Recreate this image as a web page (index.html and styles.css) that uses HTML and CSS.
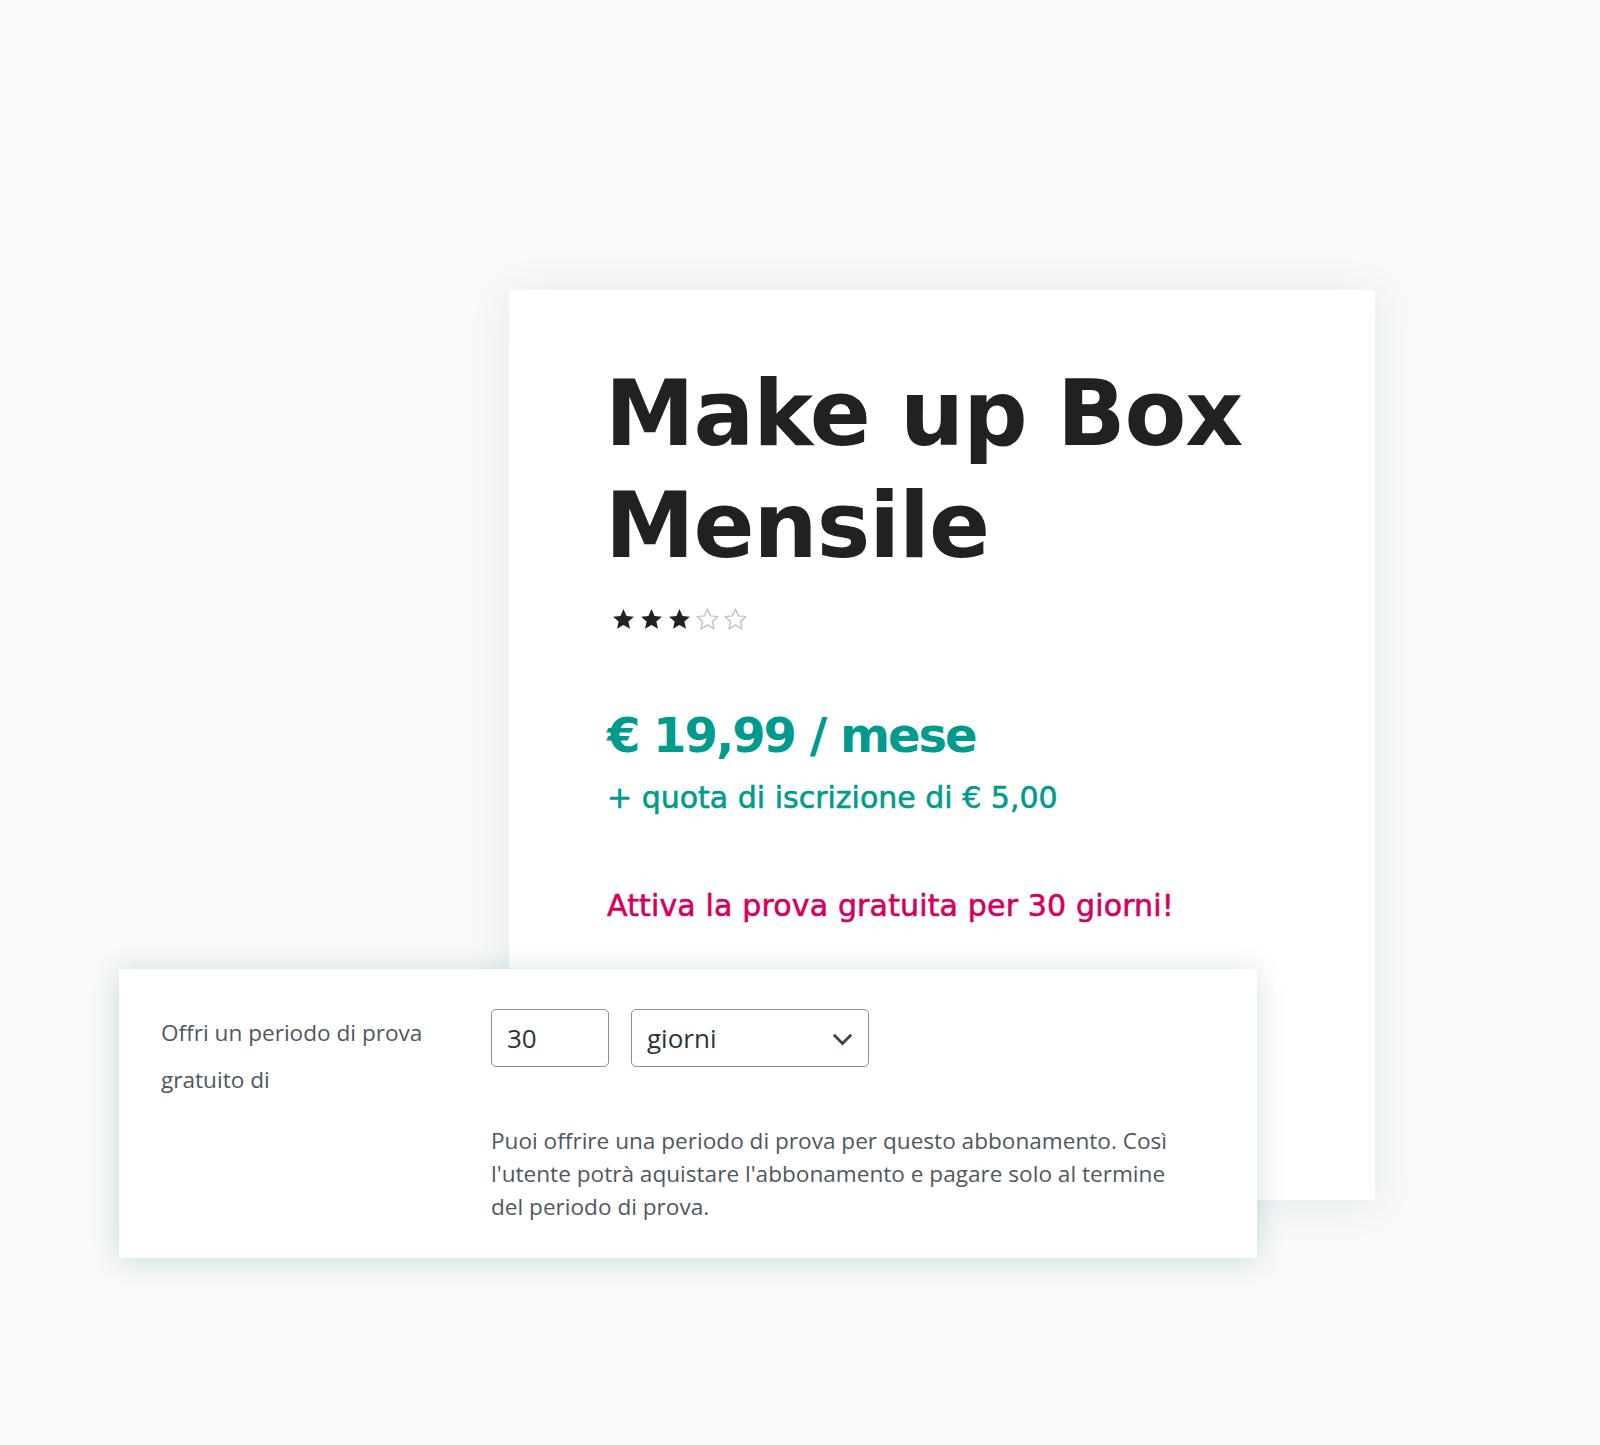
FILE: index.html
```html
<!DOCTYPE html>
<html lang="it">
<head>
<meta charset="utf-8">
<title>Make up Box Mensile</title>
<link rel="stylesheet" href="styles.css">
</head>
<body>
<div class="stage">
  <section class="product-card">
    <h1 class="title">Make up Box Mensile</h1>
    <div class="stars">
      <svg class="star full" viewBox="0 0 24 24"><path d="M12 2l2.94 6.53 7.06.72-5.3 4.750 1.5 6.94L12 17.27 5.8 20.94l1.5-6.94L2 9.25l7.06-.72z"/></svg>
      <svg class="star full" viewBox="0 0 24 24"><path d="M12 2l2.94 6.53 7.06.72-5.3 4.75 1.5 6.94L12 17.27 5.8 20.94l1.5-6.94L2 9.25l7.06-.72z"/></svg>
      <svg class="star full" viewBox="0 0 24 24"><path d="M12 2l2.94 6.53 7.06.72-5.3 4.75 1.5 6.94L12 17.27 5.8 20.94l1.5-6.94L2 9.25l7.06-.72z"/></svg>
      <svg class="star empty" viewBox="0 0 24 24"><path d="M12 2l2.94 6.53 7.06.72-5.3 4.75 1.5 6.94L12 17.27 5.8 20.94l1.5-6.94L2 9.25l7.06-.72z"/></svg>
      <svg class="star empty" viewBox="0 0 24 24"><path d="M12 2l2.94 6.53 7.06.72-5.3 4.75 1.5 6.94L12 17.27 5.8 20.94l1.5-6.94L2 9.25l7.06-.72z"/></svg>
    </div>
    <p class="price">€ 19,99 / mese</p>
    <p class="fee">+ quota di iscrizione di € 5,00</p>
    <p class="trial">Attiva la prova gratuita per 30 giorni!</p>
  </section>

  <section class="settings-card">
    <div class="label">Offri un periodo di prova gratuito di</div>
    <div class="fields">
      <input class="num-input" type="text" value="30">
      <div class="select">
        <span>giorni</span>
        <svg class="chevron" viewBox="0 0 21 13"><path d="M1.8 1.8L10.5 10.5L19.2 1.8"/></svg>
      </div>
    </div>
    <p class="desc">Puoi offrire una periodo di prova per questo abbonamento. Così l'utente potrà aquistare l'abbonamento e pagare solo al termine del periodo di prova.</p>
  </section>
</div>
</body>
</html>
```

FILE: styles.css
```css
html, body {
  margin: 0;
  padding: 0;
}
body {
  background: #f8f9f9;
  width: 1600px;
  min-height: 1445px;
}
.stage {
  display: grid;
  grid-template-columns: 390px 748px 118px;
  grid-template-rows: 679px 231px auto;
  padding: 290px 0 0 119px;
}
.product-card {
  grid-column: 2 / 4;
  grid-row: 1 / 3;
  background: #fff;
  box-shadow: 0 4px 40px rgba(20, 90, 110, 0.09);
  padding: 68px 40px 0 98px;
  box-sizing: border-box;
  font-family: "DejaVu Sans", sans-serif;
}
.title {
  margin: 0 0 0 -2px;
  font-size: 90px;
  line-height: 112px;
  font-weight: 700;
  color: #212121;
  letter-spacing: -1px;
  width: 680px;
}
.stars {
  display: flex;
  gap: 3px;
  margin: 25px 0 0 4px;
}
.star {
  width: 25px;
  height: 25px;
}
.star.full path {
  fill: #222;
}
.star.empty path {
  fill: none;
  stroke: #c3c4c7;
  stroke-width: 1.4;
  stroke-linejoin: round;
}
.price {
  margin: 74px 0 0;
  font-size: 48px;
  line-height: 58px;
  font-weight: 700;
  letter-spacing: -2px;
  color: #009b8d;
}
.fee {
  margin: 16px 0 0;
  font-size: 30px;
  line-height: 36px;
  color: #009b8d;
  letter-spacing: 0;
  -webkit-text-stroke: 0.6px #009b8d;
}
.trial {
  margin: 72px 0 0;
  font-size: 30px;
  line-height: 36px;
  color: #d5005d;
  letter-spacing: 0.15px;
  -webkit-text-stroke: 0.6px #d5005d;
}
.settings-card {
  grid-column: 1 / 3;
  grid-row: 2 / 4;
  position: relative;
  background: #fff;
  box-shadow: 0 2px 26px rgba(10, 100, 120, 0.2);
  padding: 40px 42px 35px;
  display: grid;
  grid-template-columns: 330px 1fr;
  font-family: "Open Sans", sans-serif;
  color: #50575e;
}
.label {
  grid-column: 1;
  grid-row: 1 / span 2;
  width: 300px;
  font-size: 22.6px;
  line-height: 47px;
}
.fields {
  grid-column: 2;
  grid-row: 1;
  display: flex;
  gap: 22px;
}
.num-input {
  box-sizing: border-box;
  width: 118px;
  height: 58px;
  margin: 0;
  border: 1.5px solid #8c8f94;
  border-radius: 5px;
  padding: 0 15px;
  font-family: "Open Sans", sans-serif;
  font-size: 26px;
  color: #2c3338;
  background: #fff;
  outline: none;
}
.select {
  box-sizing: border-box;
  width: 238px;
  height: 58px;
  border: 1.5px solid #8c8f94;
  border-radius: 5px;
  padding: 0 15px 0 15px;
  display: flex;
  align-items: center;
  justify-content: space-between;
  font-size: 26px;
  color: #2c3338;
}
.chevron {
  width: 21px;
  height: 13px;
  margin-top: 2px;
}
.chevron path {
  fill: none;
  stroke: #3c434a;
  stroke-width: 2.8;
}
.desc {
  grid-column: 2;
  grid-row: 2;
  margin: 57px 0 0;
  width: 700px;
  font-size: 22.6px;
  line-height: 33px;
}
```
